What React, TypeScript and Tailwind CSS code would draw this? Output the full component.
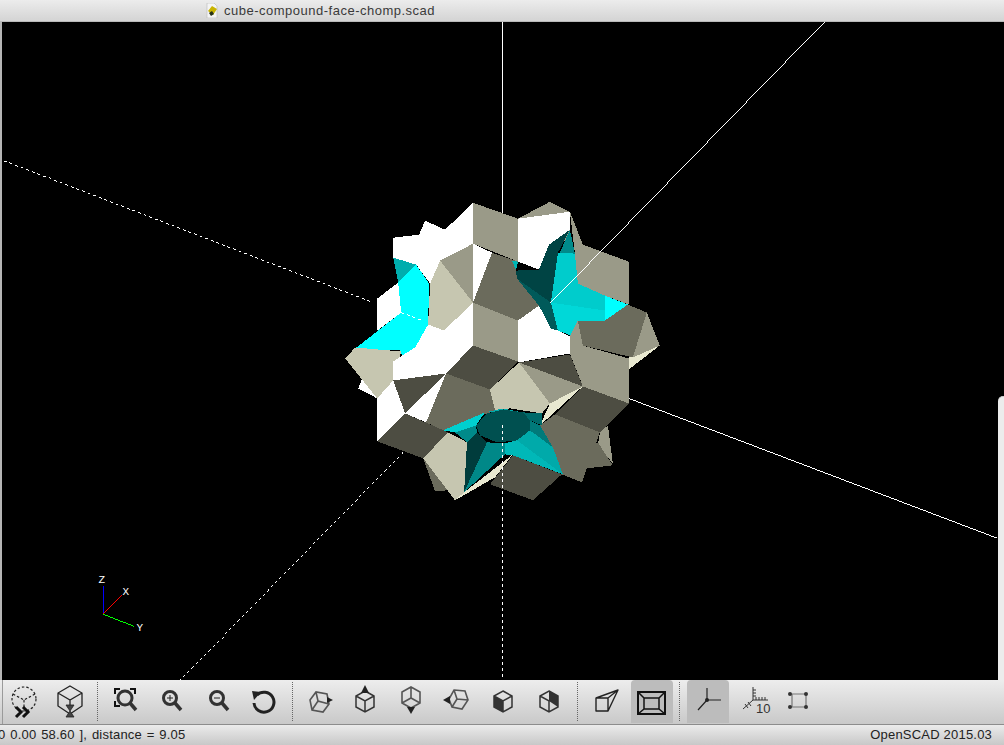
const faces: [string, string][] = [
  // back pieces
  ['#9a9a88', '518,218 550,201 570,211 570,240 518,240'],
  ['#6b6b5c', '423,458 435,491 448,490 450,470'],
  ['#9a9a88', '600,432 608,425 613,463 598,445'],
  ['#6b6b5c', '598,442 613,465 587,468 582,482 585,450'],
  ['#e8e8d0', '660,345 629,369 629,350 640,340'],
  ['#9a9a88', '647,312 660,345 633,357 630,330'],
  // upper cap
  ['#ffffff', '393,237 419,234 425,220 445,229 473,202 473,243 440,260 430,283 416,264 393,257'],
  ['#9a9a88', '473,202 518,218 518,261 473,243'],
  ['#ffffff', '518,218 570,211 570,229 549,244 539,269 518,261'],
  ['#9a9a88', '570,211 583,244 629,261 629,304 605,295 578,283 575,253'],
  ['#ffffff', '473,243 492,252 473,302'],
  ['#6b6b5c', '492,252 518,261 516,270 518,278 539,305 518,320 473,302'],
  ['#9a9a88', '440,260 473,243 473,302'],
  ['#c6c6b0', '440,260 473,302 444,330 428,324 430,283'],
  // left cyan pocket
  ['#00ffff', '398,282 416,264 429,283 428,324 401,312'],
  ['#00adad', '393,257 416,264 398,282'],
  ['#ffffff', '377,298 398,282 401,312 377,330'],
  ['#00ffff', '401,312 428,324 415,347 402,355 400,350 355,348'],
  ['#ffffff', '358,388 362,378 377,398'],
  ['#c6c6b0', '345,358 355,347 401,351 393,380 377,398'],
  ['#ffffff', '428,324 444,330 473,302 473,345 446,373 393,380 393,361 402,355 415,347'],
  ['#9a9a88', '473,302 518,320 518,361 473,345'],
  ['#ffffff', '518,320 539,305 551,328 558,330 570,336 570,353 518,362'],
  // right cyan pocket
  ['#004444', '516,270 539,269 549,244 570,229 558,252 551,302 517,278'],
  ['#008a8a', '560,252 570,229 575,253'],
  ['#00cccc', '558,252 575,253 578,283 605,295 605,310 551,302'],
  ['#00ffff', '605,295 628,304 605,320'],
  ['#00d8d8', '551,302 605,310 605,320 578,320 576,337 558,330'],
  ['#005a5a', '517,278 551,302 558,330 551,328 539,305'],
  ['#00b5b5', '512,260 518,261 516,270'],
  // right side
  ['#9a9a88', '570,336 578,320 583,345 583,386 570,353'],
  ['#6b6b5c', '578,320 605,320 628,304 647,312 633,357 583,345'],
  ['#9a9a88', '583,345 629,358 629,403 583,386'],
  // lower band
  ['#4d4d42', '473,345 518,361 490,389 446,373'],
  ['#4d4d42', '519,362 570,354 583,386'],
  ['#9a9a88', '519,362 583,386 550,403'],
  ['#c6c6b0', '519,362 550,403 542,413 510,408 495,410 490,389'],
  ['#e8e8d0', '583,386 540,425 550,403'],
  ['#4d4d42', '583,386 629,403 600,432 555,414'],
  ['#6b6b5c', '555,414 600,432 582,482 562,474 540,425'],
  ['#4d4d42', '393,380 446,373 405,413'],
  ['#ffffff', '446,373 426,422 405,413'],
  ['#6b6b5c', '446,373 490,389 495,410 443,430 426,422'],
  ['#ffffff', '377,398 393,380 405,413 377,441'],
  // bottom pocket
  ['#00cfcf', '443,430 485,412 476,425 455,432'],
  ['#00aaaa', '485,412 503,408 523,412 500,412'],
  ['#006a6a', '523,412 542,413 542,425 530,420'],
  ['#008a8a', '455,432 476,425 477,432 467,442'],
  ['#007a7a', '530,420 540,425 553,447 530,430'],
  ['#00aaaa', '530,430 553,447 563,474 517,440'],
  ['#00b8b8', '517,440 505,443 505,454 513,455 563,474'],
  ['#008888', '487,442 505,443 505,454 464,492'],
  ['#003c3c', '477,432 487,442 464,492 467,442'],
  ['#005050', '476,425 487,413 503,409 523,412 530,420 530,430 517,440 497,442 480,435'],
  ['#4d4d42', '405,413 448,432 423,458 377,441'],
  ['#c6c6b0', '448,432 467,442 464,492 455,500 423,458'],
  ['#4d4d42', '513,455 562,474 533,500 490,484'],
  ['#e8e8d0', '455,500 464,492 513,454 495,477'],
]

function Scene() {
  return (
    <svg viewBox="2 21 1002 659" className="block h-full w-full">
      <g stroke="#ffffff" fill="none" shapeRendering="crispEdges">
        <path d="M502.5 21V212" />
        <path d="M629 398L998 538" />
        <path d="M3 160L373 302M403 452L180 680M502.5 500V680" strokeDasharray="3 3" />
      </g>
      <g shapeRendering="crispEdges">
        {faces.map(([fill, points], i) => (
          <polygon key={i} fill={fill} points={points} />
        ))}
      </g>
      <g stroke="#ffffff" fill="none" shapeRendering="crispEdges">
        <path d="M551 302L825 21" />
        <path d="M401 312L422 320M502.5 425V500" strokeDasharray="3 3" />
      </g>
      <g fill="none" shapeRendering="crispEdges">
        <path d="M102.5 586V614" stroke="#0000ff" />
        <path d="M102 614L121 595" stroke="#ff0000" />
        <path d="M102 614L133 626" stroke="#00ff00" />
      </g>
      <g fill="#ffffff" fontFamily="'Liberation Mono', monospace" fontSize="11">
        <text x="98" y="583">Z</text>
        <text x="122" y="595">X</text>
        <text x="136" y="631">Y</text>
      </g>
    </svg>
  )
}

function CubeBase({ stroke = '#333333' }: { stroke?: string }) {
  return (
    <path
      d="M23 11L32 16V27L23 32L14 27V16ZM14 16L23 21L32 16M23 21V32"
      fill="none"
      stroke={stroke}
      strokeWidth="1.5"
    />
  )
}

const icons: Record<string, React.ReactNode> = {
  preview: (
    <>
      <circle cx="23" cy="19" r="12" fill="none" stroke="#222" strokeWidth="1.2" strokeDasharray="2.5 2" />
      <path d="M12 14L23 20L34 14M23 20V28" fill="none" stroke="#222" strokeWidth="1.2" strokeDasharray="2.5 2" />
      <path d="M15 27L20 32L15 37M22 27L27 32L22 37" fill="none" stroke="#111" strokeWidth="3" />
    </>
  ),
  render: (
    <>
      <path d="M23 6L35 13V26L23 34L11 26V13ZM11 13L23 20L35 13M23 20V26" fill="none" stroke="#222" strokeWidth="1.3" />
      <path d="M19 25H27L23 31L27 37H19L23 31Z" fill="#444" stroke="#222" strokeWidth="0.8" />
    </>
  ),
  viewAll: (
    <>
      <path d="M14 14V9H19M29 9H34V14M14 21V26H19" fill="none" stroke="#111" strokeWidth="2" />
      <circle cx="24" cy="18" r="7" fill="none" stroke="#333" strokeWidth="3" />
      <path d="M29 23L35 30" stroke="#333" strokeWidth="3.5" />
    </>
  ),
  zoomIn: (
    <>
      <circle cx="23" cy="18" r="6.5" fill="none" stroke="#333" strokeWidth="3" />
      <path d="M28 23L34 30" stroke="#333" strokeWidth="3.5" />
      <path d="M20 18H26M23 15V21" stroke="#222" strokeWidth="1" />
    </>
  ),
  zoomOut: (
    <>
      <circle cx="24" cy="18" r="6.5" fill="none" stroke="#333" strokeWidth="3" />
      <path d="M29 23L35 30" stroke="#333" strokeWidth="3.5" />
      <path d="M21 18H27" stroke="#222" strokeWidth="1" />
    </>
  ),
  reset: (
    <>
      <path d="M18 15A10 10 0 1 1 15 23" fill="none" stroke="#222" strokeWidth="3" />
      <path d="M13 11L22 12L15 20Z" fill="#222" />
    </>
  ),
  right: (
    <>
      <path d="M14 20L20 12L31 14L33 24L27 32L16 30ZM20 12L22 21L33 24M22 21L16 30" fill="none" stroke="#555" strokeWidth="1.6" />
      <path d="M31 17L37 20L31 23Z" fill="#222" />
    </>
  ),
  top: (
    <>
      <CubeBase />
      <path d="M23 5L27 13H19Z" fill="#222" />
    </>
  ),
  bottom: (
    <>
      <path d="M23 7L32 12V23L23 28L14 23V12ZM23 18L14 23M23 18L32 23M23 18V8" fill="none" stroke="#555" strokeWidth="1.6" />
      <path d="M19 27H27L23 34Z" fill="#222" />
    </>
  ),
  left: (
    <>
      <path d="M20 10L31 11L34 20L28 29L18 27L15 19ZM20 10L23 19L34 20M23 19L18 27" fill="none" stroke="#555" strokeWidth="1.6" />
      <path d="M9 20L16 16V24Z" fill="#222" />
    </>
  ),
  front: (
    <>
      <path d="M14 16L23 21V32L14 27Z" fill="#333" />
      <CubeBase />
    </>
  ),
  back: (
    <>
      <path d="M23 11L32 16V27L23 21Z" fill="#333" />
      <CubeBase />
    </>
  ),
  perspective: (
    <>
      <path d="M13 18H25V31H13ZM13 18L35 10L25 18M35 10L25 31" fill="none" stroke="#222" strokeWidth="1.4" strokeLinejoin="round" />
    </>
  ),
  ortho: (
    <>
      <path d="M9 12H36V34H9ZM15 18H30V29H15ZM9 12L15 18M36 12L30 18M9 34L15 29M36 34L30 29" fill="none" stroke="#111" strokeWidth="1.5" />
      <path d="M9 12H36V34H9Z" fill="none" stroke="#111" strokeWidth="2" />
    </>
  ),
  axes: (
    <>
      <path d="M22 8V20H36M22 20L13 30" fill="none" stroke="#222" strokeWidth="1.2" />
      <circle cx="22" cy="20" r="2" fill="#222" />
    </>
  ),
  scale: (
    <>
      <path d="M20 7V20H35M20 20L10 29M23 20V17M26 20V17M29 20V17M32 20V17M20 10H23M20 13H23M20 16H23M12 24L15 28M15 22L18 26" fill="none" stroke="#333" strokeWidth="1" />
      <text x="23" y="33" fontFamily="'Liberation Sans', sans-serif" fontSize="13" fill="#333">10</text>
    </>
  ),
  edges: (
    <>
      <path d="M16 14H30V27H16Z" fill="none" stroke="#777" strokeWidth="1.2" />
      <g fill="#333">
        <circle cx="14" cy="14" r="2" />
        <circle cx="30" cy="14" r="2" />
        <circle cx="14" cy="27" r="2" />
        <circle cx="30" cy="27" r="2" />
      </g>
    </>
  ),
}

function Tool({ name, active, className = '' }: { name: string; active?: boolean; className?: string }) {
  return (
    <div className={`flex h-[43px] w-[46px] shrink-0 justify-center ${className}`}>
      <div className={`h-full w-[42px] rounded-t-[4px] ${active ? 'bg-[#bcbcbc]' : ''}`}>
        <svg viewBox="2 0 42 43" className="block h-[43px] w-[42px]">
          {icons[name]}
        </svg>
      </div>
    </div>
  )
}

function Sep({ className }: { className: string }) {
  return <div className={`h-[39px] w-0 self-center border-l border-dotted border-[#666] ${className}`} />
}

export default function App() {
  return (
    <div className="flex h-[745px] w-[1004px] flex-col overflow-hidden bg-black font-['Liberation_Sans',sans-serif]">
      <div className="flex h-[22px] shrink-0 items-center border-b border-[#b9b9b9] bg-gradient-to-b from-[#ececec] to-[#d4d4d4] pl-[206px]">
        <svg viewBox="0 0 12 15" className="h-[15px] w-[12px]">
          <path d="M1 0H8L11 3V15H1Z" fill="#f4f4f4" stroke="#bbb" strokeWidth="0.6" />
          <path d="M2 8L6 3L11 6L7 12Z" fill="#c9b400" />
          <path d="M3 10L6 8L8 11L5 13Z" fill="#26331a" />
        </svg>
        <span className="ml-[6px] text-[13px] tracking-[0.5px] text-[#3a3a3a]">cube-compound-face-chomp.scad</span>
      </div>

      <div className="relative min-h-0 flex-1 border-l-2 border-[#b5b5b5]">
        <Scene />
        <div className="absolute right-0 top-[374px] bottom-0 w-[6px] rounded-tl-[5px] border-t border-[#ccc] bg-[#ececec]" />
      </div>

      <div className="relative flex h-[45px] shrink-0 items-end border-b border-[#8c8c8c] bg-gradient-to-b from-[#ededed] to-[#c9c9c9] pb-[1px] pl-[1px]">
        <div className="absolute bottom-0 left-[2px] top-0 w-px bg-[#9a9a9a]" />
        <Tool name="preview" />
        <Tool name="render" />
        <Sep className="ml-1 mr-[3px]" />
        <Tool name="viewAll" />
        <Tool name="zoomIn" />
        <Tool name="zoomOut" />
        <Tool name="reset" />
        <Sep className="ml-[7px] mr-[3px]" />
        <Tool name="right" />
        <Tool name="top" />
        <Tool name="bottom" />
        <Tool name="left" />
        <Tool name="front" />
        <Tool name="back" />
        <Sep className="ml-[5px] mr-[5px]" />
        <Tool name="perspective" />
        <Tool name="ortho" active />
        <Sep className="ml-1 mr-[5px]" />
        <Tool name="axes" active />
        <Tool name="scale" className="ml-[2px]" />
        <Tool name="edges" className="-ml-[3px]" />
      </div>

      <div className="flex h-[20px] shrink-0 items-center justify-between overflow-hidden bg-gradient-to-b from-[#ebebeb] to-[#c8c8c8] pr-[12px] text-[13px] tracking-[0.2px] text-[#222]">
        <span className="-ml-[2px] [word-spacing:1px]">0 0.00 58.60 ], distance = 9.05</span>
        <span>OpenSCAD 2015.03</span>
      </div>
    </div>
  )
}
